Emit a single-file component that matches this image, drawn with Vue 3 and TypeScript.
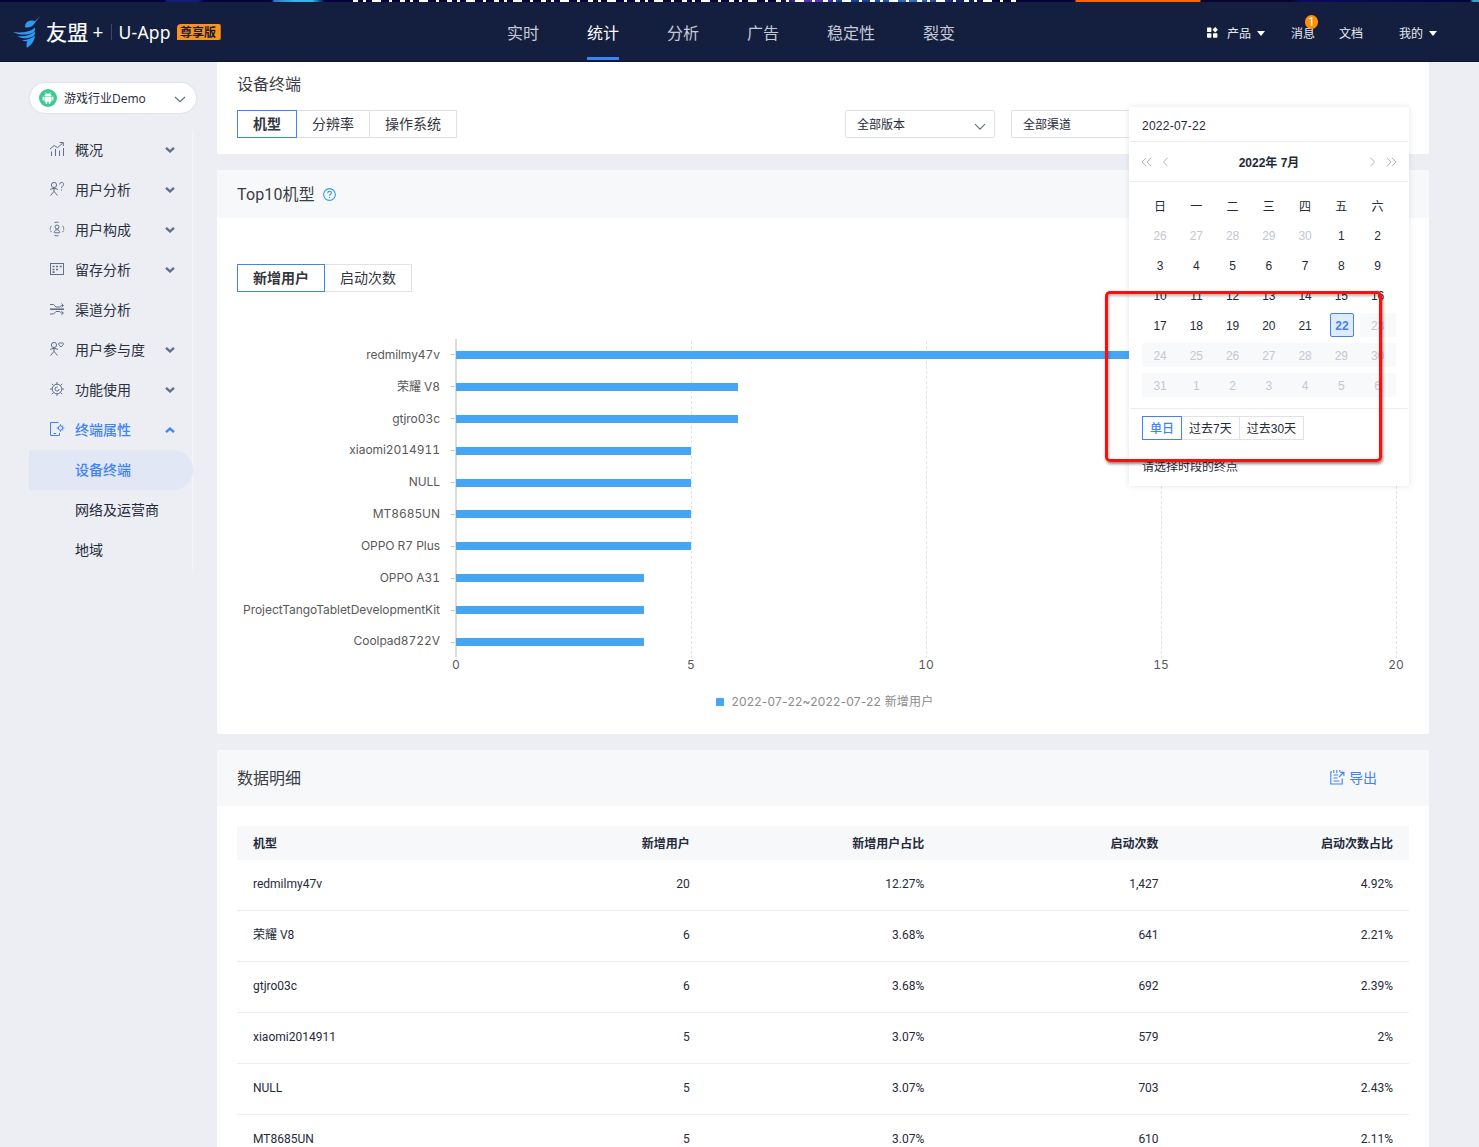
<script setup lang="ts">
interface MenuItem {
  label: string
  icon: string
  arrow: 'down' | 'up' | ''
}
interface Device {
  name: string
  users: number
  userShare: string
  launches: string
  launchShare: string
}
interface Day {
  n: number
  state: '' | 'muted' | 'selected' | 'off'
  edge: '' | 'first' | 'last'
}

const navItems: string[] = ['实时', '统计', '分析', '广告', '稳定性', '裂变']

const menu: MenuItem[] = [
  { label: '概况', icon: 'trend', arrow: 'down' },
  { label: '用户分析', icon: 'ask', arrow: 'down' },
  { label: '用户构成', icon: 'group', arrow: 'down' },
  { label: '留存分析', icon: 'grid', arrow: 'down' },
  { label: '渠道分析', icon: 'flow', arrow: '' },
  { label: '用户参与度', icon: 'heart', arrow: 'down' },
  { label: '功能使用', icon: 'gear', arrow: 'down' },
  { label: '终端属性', icon: 'device', arrow: 'up' },
]
const subMenu: string[] = ['设备终端', '网络及运营商', '地域']

const devices: Device[] = [
  { name: 'redmilmy47v', users: 20, userShare: '12.27%', launches: '1,427', launchShare: '4.92%' },
  { name: '荣耀 V8', users: 6, userShare: '3.68%', launches: '641', launchShare: '2.21%' },
  { name: 'gtjro03c', users: 6, userShare: '3.68%', launches: '692', launchShare: '2.39%' },
  { name: 'xiaomi2014911', users: 5, userShare: '3.07%', launches: '579', launchShare: '2%' },
  { name: 'NULL', users: 5, userShare: '3.07%', launches: '703', launchShare: '2.43%' },
  { name: 'MT8685UN', users: 5, userShare: '3.07%', launches: '610', launchShare: '2.11%' },
]
const bars: { name: string; value: number }[] = [
  ...devices.map((d) => ({ name: d.name, value: d.users })),
  { name: 'OPPO R7 Plus', value: 5 },
  { name: 'OPPO A31', value: 4 },
  { name: 'ProjectTangoTabletDevelopmentKit', value: 4 },
  { name: 'Coolpad8722V', value: 4 },
]
const axisMax = 20
const ticks: number[] = [0, 5, 10, 15, 20]

const weekdays: string[] = ['日', '一', '二', '三', '四', '五', '六']
// July 2022 starts on a Friday; the grid opens on June 26.
const days: Day[] = Array.from({ length: 42 }, (_, i): Day => {
  const n = i < 5 ? 26 + i : i < 36 ? i - 4 : i - 35
  const state = i < 5 ? 'muted' : i === 26 ? 'selected' : i > 26 ? 'off' : ''
  const edge = i === 27 ? 'first' : i % 7 === 0 ? 'first' : i % 7 === 6 ? 'last' : ''
  return { n, state, edge }
})
</script>

<template>
  <div class="page">
    <div class="banner"><span class="banner-art"></span></div>
    <header class="header">
      <div class="brand">
        <svg class="bird" width="28" height="32" viewBox="0 0 28 32">
          <path fill="#2d9bf3" d="M27 0 L22 5.2 C20 4 16 4.3 14 6 C12.3 7.6 12 9.5 12 11.2 C16 12 19.5 10.5 21.5 7.5 L22.8 5.8 Z" />
          <path fill="#2d9bf3" d="M0 16 C8 17 17 16.5 22 11.5 C22.5 14 21.5 15.8 20 16.7 C14 19.5 5 19 0 16 Z" />
          <path fill="#2d9bf3" d="M4.5 20 C11 20.8 18 19.5 22 15.5 C22.4 17.5 21.5 19.5 19.8 20.5 C15 23 8.5 23 4.5 20 Z" />
          <path fill="#2d9bf3" d="M9 24 C14 24.3 18.5 22.7 21.8 19.5 C22 24 18.5 29.5 13.8 31.8 C13.5 29 13.3 27 14.4 25.2 C12.5 25.5 10.5 25 9 24 Z" />
        </svg>
        <span class="brand-cn">友盟</span><span class="brand-plus">+</span>
        <i class="brand-line"></i>
        <span class="brand-app">U-App</span>
        <span class="brand-tag">尊享版</span>
      </div>
      <nav class="nav">
        <a v-for="(n, i) in navItems" :key="n" :class="{ active: i === 1 }">{{ n }}</a>
      </nav>
      <div class="tools">
        <svg class="apps" width="11" height="11" viewBox="0 0 11 11" fill="#fff">
          <rect x="0" y="0.5" width="4.4" height="4.4" rx=".6" /><path d="M8.2 0 L10.9 2.7 L8.2 5.4 L5.5 2.7 Z" />
          <rect x="0" y="6.3" width="4.4" height="4.4" rx=".6" /><rect x="6" y="6.3" width="4.4" height="4.4" rx=".6" />
        </svg>
        <span class="t-product">产品</span><i class="caret"></i>
        <span class="t-msg">消息<b class="badge">1</b></span>
        <span class="t-doc">文档</span>
        <span class="t-mine">我的</span><i class="caret"></i>
      </div>
    </header>

    <div class="body">
      <aside class="side">
        <div class="app-select">
          <svg width="18" height="18" viewBox="0 0 18 18">
            <circle cx="9" cy="9" r="9" fill="#3ecb93" />
            <g fill="#fff"><path d="M5.4 7 C5.6 5.4 7 4.4 9 4.4 C11 4.4 12.4 5.4 12.6 7 Z" />
              <rect x="5.4" y="7.5" width="7.2" height="5.2" rx=".6" /><rect x="3.6" y="7.5" width="1.3" height="4" rx=".6" /><rect x="13.1" y="7.5" width="1.3" height="4" rx=".6" />
              <rect x="6.7" y="12" width="1.5" height="3" rx=".6" /><rect x="9.8" y="12" width="1.5" height="3" rx=".6" /></g>
            <path d="M6.4 3 L7.3 4.8 M11.6 3 L10.7 4.8" stroke="#fff" stroke-width=".6" />
          </svg>
          <span>游戏行业Demo</span>
          <svg class="chev" width="12" height="7" viewBox="0 0 12 7"><path d="M1 1 L6 5.7 L11 1" fill="none" stroke="#5f7088" stroke-width="1.2" /></svg>
        </div>
        <ul class="menu">
          <li v-for="m in menu" :key="m.label" :class="{ open: m.arrow === 'up' }">
            <svg class="m-icon" width="16" height="16" viewBox="0 0 16 16" fill="none" stroke="currentColor" stroke-width="1">
              <template v-if="m.icon === 'trend'">
                <path d="M1 8 L5.2 4.6 L8.6 6.6 L13.8 2 M10.6 1.5 H14.3 V5" /><path d="M2.5 15 V10.5 M6.5 15 V8 M10.5 15 V9.5 M14.5 15 V7" />
              </template>
              <template v-else-if="m.icon === 'ask'">
                <circle cx="5" cy="4" r="2.6" /><path d="M5 6.6 V10.6 M1 8.5 C3 7.2 7 7.2 9 8.5 M5 10.4 L1.5 14.5 M5 10.4 L8.5 14.5" />
                <path d="M10.6 3.5 C10.6 .6 14.6 .8 14.6 3.3 C14.6 5 12.6 5 12.6 7 M12.6 8.4 V9.6" />
              </template>
              <template v-else-if="m.icon === 'group'">
                <circle cx="8" cy="6" r="2" /><path d="M5.2 12 C5.2 7.6 10.8 7.6 10.8 12 M6 11.8 H10" />
                <path d="M5.5 1.6 C7 1 9 1 10.5 1.6 M5.5 14.4 C7 15 9 15 10.5 14.4 M2.4 4.8 C.9 6.5 .9 9.5 2.4 11.2 M13.6 4.8 C15.1 6.5 15.1 9.5 13.6 11.2" stroke-dasharray="4 1" />
              </template>
              <template v-else-if="m.icon === 'grid'">
                <rect x="1.5" y="2.5" width="13" height="11" />
                <path d="M3.5 5.5 h2 M7 5.5 h2 M10.7 5.5 h2 M3.5 8.5 h2 M7 8.5 h2 M3.5 11.2 h2" stroke-width="1.7" />
              </template>
              <template v-else-if="m.icon === 'flow'">
                <path d="M1 3.5 H4.5 L7 6 H10.5 L12.5 4.5 H14.2 M12.4 2.6 L14.4 4.5 L12.4 6.4 M1 13 H4.5 L7 10.5 H10.5 L12.5 12 H14.2 M12.4 10.1 L14.4 12 L12.4 13.9" />
                <path d="M1 8.2 H15" stroke-width="1.6" />
              </template>
              <template v-else-if="m.icon === 'heart'">
                <circle cx="5" cy="4" r="2.6" /><path d="M5 6.6 V10.6 M1 8.5 C3 7.2 7 7.2 9 8.5 M5 10.4 L1.5 14.5 M5 10.4 L8.5 14.5" />
                <path d="M12 6 L9.8 3.6 C9 2 11 1 12 2.4 C13 1 15 2 14.3 3.6 Z" />
              </template>
              <template v-else-if="m.icon === 'gear'">
                <circle cx="8" cy="8" r="4.8" /><circle cx="8" cy="8" r="2" stroke-dasharray="9 3" />
                <path d="M8 3.2 V1 M8 15 V12.8 M3.2 8 H1 M15 8 H12.8 M4.6 4.6 L2.8 2.8 M11.4 4.6 L13.2 2.8 M4.6 11.4 L2.8 13.2 M11.4 11.4 L13.2 13.2" />
              </template>
              <template v-else>
                <path d="M9.5 1.5 H1.5 V14.5 H10.5 V12 M4.5 12.5 H7" /><circle cx="11.5" cy="7" r="2.2" />
                <path d="M11.5 3.2 V4.8 M11.5 9.2 V10.8 M7.6 7 H9.3 M13.7 7 H15.3 M14 4.5 L13 5.5 M14 9.5 L13 8.5" />
              </template>
            </svg>
            <span>{{ m.label }}</span>
            <svg v-if="m.arrow" class="m-arrow" :class="m.arrow" width="10" height="8" viewBox="0 0 10 8"><path d="M1 1.8 L5 5.4 L9 1.8" fill="none" stroke="currentColor" stroke-width="2.3" /></svg>
          </li>
        </ul>
        <ul class="sub">
          <li v-for="(s, i) in subMenu" :key="s" :class="{ current: i === 0 }">{{ s }}</li>
        </ul>
      </aside>

      <main class="main">
        <section class="card filter">
          <h2>设备终端</h2>
          <div class="filter-row">
            <div class="tabs"><span class="on">机型</span><span>分辨率</span><span>操作系统</span></div>
            <div class="select s1">全部版本<svg width="12" height="8" viewBox="0 0 12 8"><path d="M1 1.2 L6 6.2 L11 1.2" fill="none" stroke="#5f7088" stroke-width="1.2" /></svg></div>
            <div class="select s2">全部渠道</div>
          </div>
        </section>

        <section class="card top">
          <div class="head"><span class="latin">Top10机型</span>
            <svg width="13" height="13" viewBox="0 0 12 12" fill="none" stroke="#2d9bf3"><circle cx="6" cy="6" r="5.4" /><path d="M4.3 4.8 C4.3 2.6 7.7 2.6 7.7 4.6 C7.7 5.8 6 5.8 6 7.2 M6 8.2 V9.3" /></svg>
          </div>
          <div class="tabs"><span class="on">新增用户</span><span>启动次数</span></div>
          <div class="chart">
            <div class="plot">
              <div class="names"><span v-for="b in bars" :key="b.name">{{ b.name }}</span></div>
              <div class="marks"><i v-for="b in bars" :key="b.name"></i></div>
              <div class="area">
                <div v-for="b in bars" :key="b.name" class="row"><i :style="{ width: (b.value / axisMax) * 100 + '%' }"></i></div>
              </div>
            </div>
            <div class="ticks"><span v-for="t in ticks" :key="t">{{ t }}</span></div>
            <div class="legend"><i></i>2022-07-22~2022-07-22 新增用户</div>
          </div>
        </section>

        <section class="card detail">
          <div class="head"><span>数据明细</span>
            <a class="export">
              <svg width="15" height="15" viewBox="0 0 15 15" fill="none" stroke="#3f83f8" stroke-width="1.1"><path d="M2 1.8 H.8 V14 H12.2 V8.5 M3.8 0 V3 M6.8 0 V3 M9.8 0 V2 M3.5 5 H8 M3.5 8 H7.5 M3.5 11 H9.5 M9 7 L13.5 2.5 M10.3 2.4 H13.9 V6" /></svg>导出</a>
          </div>
          <div class="table">
            <div class="tr th"><span>机型</span><span>新增用户</span><span>新增用户占比</span><span>启动次数</span><span>启动次数占比</span></div>
            <div v-for="d in devices" :key="d.name" class="tr">
              <span>{{ d.name }}</span><span>{{ d.users }}</span><span>{{ d.userShare }}</span><span>{{ d.launches }}</span><span>{{ d.launchShare }}</span>
            </div>
          </div>
        </section>
      </main>
    </div>

    <div class="picker">
      <div class="p-input">2022-07-22</div>
      <div class="p-nav">
        <svg width="28" height="10" viewBox="0 0 28 10" fill="none" stroke="#a4a9b3" stroke-width=".9"><path d="M5 .8 L1 5 L5 9.2 M10 .8 L6 5 L10 9.2 M26.5 .8 L22.5 5 L26.5 9.2" /></svg>
        <b>2022年 7月</b>
        <svg width="28" height="10" viewBox="0 0 28 10" fill="none" stroke="#a4a9b3" stroke-width=".9"><path d="M1.5 .8 L5.5 5 L1.5 9.2 M18 .8 L22 5 L18 9.2 M23 .8 L27 5 L23 9.2" /></svg>
      </div>
      <div class="p-grid">
        <span v-for="w in weekdays" :key="w" class="wd">{{ w }}</span>
        <span v-for="(d, i) in days" :key="i" class="day" :class="[d.state, d.edge]"><em>{{ d.n }}</em></span>
      </div>
      <div class="p-foot">
        <div class="quick"><span class="on">单日</span><span>过去7天</span><span>过去30天</span></div>
        <p>请选择时段的终点</p>
      </div>
    </div>
    <div class="marker"></div>
  </div>
</template>

<style>
body { margin: 0; background: #eceef4; }
</style>

<style scoped>
* { box-sizing: border-box; }
.page { position: relative; width: 1479px; height: 1147px; overflow: hidden; background: #eceef4; font-family: Roboto, "Noto Sans CJK SC", sans-serif; font-size: 12px; color: #252a3a; }
ul { list-style: none; margin: 0; padding: 0; }
h2 { margin: 0; font-weight: 400; }
i, em { font-style: normal; }

.banner { height: 2px; padding-left: 353px; background: linear-gradient(90deg, #03023c 0 165px, #121d78 166px 198px, #03023c 205px 272px, #3273c7 274px, #38b4eb 295px 312px, #03023c 325px 780px, #5630b8 800px 820px, #153f9e 840px 870px, #3273c7 910px, #1c2a7a 950px, #03023c 1000px 1075px, #ff6500 1076px 1200px, #08042f 1201px 1290px, #0d0b5e 1300px, #03023c 1470px, #41a1bd 1473px); }
.banner-art { display: block; width: 667px; height: 2px; background: repeating-linear-gradient(90deg, #fff 0 5px, transparent 5px 10px, #fff 10px 13px, transparent 13px 19px, #fff 19px 28px, transparent 28px 36px, #fff 36px 39px, transparent 39px 47px); }
.header { height: 60px; display: flex; background: #141f3f; border-bottom: 1px solid #0b1634; color: #fff; }
.brand { width: 507px; padding-left: 14px; display: flex; align-items: center; height: 60px; }
.bird { flex: none; margin-top: -1px; margin-left: -1px; margin-right: 1px; }
.brand-cn { font: 400 21px/30px "Noto Sans CJK SC", sans-serif; margin-left: 4px; margin-top: -3px; letter-spacing: .3px; -webkit-text-stroke: .2px #fff; }
.brand-plus { font: 400 19px/30px "Noto Sans", sans-serif; margin-left: 4px; width: 11px; }
.brand-line { width: 1px; height: 16px; background: #3e4862; margin: 0 7px 0 7px; }
.brand-app { font: 400 17.5px/30px "Noto Sans", sans-serif; width: 52px; white-space: nowrap; margin-top: -1px; letter-spacing: .2px; }
.brand-tag { width: 44px; height: 16px; margin-left: 6px; background: #f7931e; border-radius: 4px 2px 2px 0; border-right: 1px solid #d96a10; color: #1b1d33; font: 700 12px/15px "Noto Sans CJK SC", sans-serif; text-align: center; }
.nav { display: flex; gap: 48px; height: 60px; }
.nav a { font-size: 16px; line-height: 64px; height: 58px; color: #c5cad6; }
.nav a.active { color: #fff; border-bottom: 3px solid #3f83f8; }
.tools { margin-left: auto; display: flex; align-items: center; height: 61px; padding-right: 42px; color: #e9ebf1; line-height: 20px; }
.tools > span { padding-top: 2px; }
.t-product { margin-left: 9px; }
.caret { border: 4px solid transparent; border-top: 5px solid #fff; border-bottom: 0; margin-left: 6px; margin-top: 1px; }
.t-msg { position: relative; margin-left: 26px; }
.badge { position: absolute; left: 14px; top: -7px; width: 13px; height: 14px; border-radius: 7px; background: #fb9206; color: #fff; font: 400 12px/14px Roboto, sans-serif; text-align: center; }
.t-doc { margin-left: 24px; }
.t-mine { margin-left: 36px; }

.body { display: flex; }
.side { width: 217px; flex: none; padding: 21px 0 0 29px; }
.app-select { width: 166px; height: 30px; border-radius: 15px; background: #fff; box-shadow: 0 0 2px rgba(60, 80, 120, .18); display: flex; align-items: center; padding: 0 10px 0 9px; margin-left: 1px; }
.app-select span { margin-left: 7px; white-space: nowrap; line-height: 30px; padding-top: 2px; font-family: "Open Sans", "Noto Sans CJK SC", sans-serif; }
.app-select .chev { margin-left: auto; margin-top: 2px; }
.menu { width: 164px; margin-top: 17px; border-right: 1px solid #f2f4f8; }
.menu li { height: 40px; display: flex; align-items: center; padding-left: 20px; font-size: 14px; line-height: 40px; color: #2b3040; }
.m-icon { color: #5f7088; margin-right: 10px; margin-top: -2px; flex: none; }
.m-arrow { margin-left: auto; margin-right: 17px; color: #5f7088; }
.m-arrow.up { transform: rotate(180deg); }
.menu li.open, .menu li.open svg { color: #3f83f8; }
.menu li.open { font-weight: 500; }
.sub { width: 164px; border-right: 1px solid #f2f4f8; }
.sub li { height: 40px; line-height: 40px; padding-left: 46px; font-size: 14px; margin-right: -1px; }
.sub .current { background: #e1e7f5; color: #3f83f8; font-weight: 500; border-radius: 0 20px 20px 0; }

.main { width: 1212px; flex: none; }
.card { background: #fff; border-radius: 2px; }
.filter { height: 92px; padding: 11px 20px 0; margin-bottom: 16px; }
.filter h2 { font-size: 16px; line-height: 24px; height: 37px; color: #3a3d45; }
.filter-row { display: flex; }
.tabs { display: flex; height: 28px; font-size: 14px; line-height: 26px; color: #33363e; }
.tabs span { height: 28px; padding: 0 15px; border: 1px solid #dfe2e9; border-left: 0; }
.tabs .on { border: 1px solid #3f83f8; font-weight: 700; }
.select { width: 150px; height: 28px; border: 1px solid #dfe2e9; border-radius: 2px; line-height: 26px; padding: 2px 8px 0 11px; display: flex; align-items: center; justify-content: space-between; }
.select svg { margin-top: 3px; }
.s1 { margin-left: 388px; }
.s2 { margin-left: 16px; }
.head { background: #f7f8fa; padding: 0 20px; display: flex; align-items: center; font-size: 16px; color: #3a3d45; }
.top { height: 564px; margin-bottom: 16px; }
.top .head { height: 48px; line-height: 48px; }
.latin { letter-spacing: .15px; padding-top: 2px; }
.top .head svg { margin-left: 8px; }
.top > .tabs { margin: 46px 0 0 20px; }
.chart { margin-top: 47px; padding-left: 20px; color: #595959; font-family: Inter, "Noto Sans CJK SC", sans-serif; font-variant-numeric: tabular-nums; }
.plot { display: flex; height: 319px; }
.names { width: 203px; height: 318.4px; margin-top: .4px; display: flex; flex-direction: column; text-align: right; white-space: nowrap; letter-spacing: -.05px; }
.names span { flex: 1; display: flex; align-items: center; justify-content: flex-end; line-height: 16px; padding-bottom: 1px; }
.marks { width: 15px; display: flex; flex-direction: column; align-items: flex-end; }
.marks i { flex: 1; width: 4px; background: linear-gradient(#ccc, #ccc) center / 4px 1px no-repeat; }
.area { width: 942px; border-left: 2px solid #dcdcdc; display: flex; flex-direction: column; background: repeating-linear-gradient(180deg, #fff 0 2px, transparent 2px 5px), linear-gradient(90deg, transparent 233.5px, #e3e3e3 233.5px 234.5px, transparent 234.5px 468.5px, #e3e3e3 468.5px 469.5px, transparent 469.5px 703.5px, #e3e3e3 703.5px 704.5px, transparent 704.5px 938.5px, #e3e3e3 938.5px 939.5px, transparent 939.5px); }
.row { flex: 1; display: flex; align-items: center; margin-left: -1px; width: 940px; }
.row i { height: 8px; background: #47a5f5; }
.ticks { display: flex; justify-content: space-between; margin-left: 204px; width: 970px; line-height: 14px; }
.ticks span { width: 30px; text-align: center; }
.legend { display: flex; align-items: center; justify-content: center; width: 1175px; margin-top: 21px; line-height: 18px; color: #8c8c8c; font-variant-numeric: normal; letter-spacing: .2px; }
.legend i { width: 8px; height: 8px; background: #47a5f5; margin-right: 8px; }
.detail { height: 460px; }
.detail .head { height: 56px; padding-bottom: 2px; }
.export { margin-left: auto; margin-right: 32px; color: #3f83f8; font-size: 14px; display: flex; align-items: center; gap: 4px; }
.table { margin: 20px 20px 0; }
.tr { display: flex; height: 51px; line-height: 48px; border-bottom: 1px solid #eceef1; }
.tr span { width: 234.5px; text-align: right; padding-right: 16px; }
.tr span:first-child { width: 234px; padding-left: 16px; text-align: left; }
.tr span:nth-child(2) { width: 235px; }
.th { height: 34px; line-height: 37px; background: #f7f8fa; border: 0; font-weight: 700; }

.picker { position: absolute; left: 1129px; top: 107px; width: 280px; height: 379px; background: #fff; box-shadow: 0 0 6px rgba(60, 70, 130, .14); font-family: "Liberation Sans", "Noto Sans CJK SC", sans-serif; }
.p-input { height: 35px; margin: 0 1px; padding-left: 12px; line-height: 39px; border-bottom: 1px solid #eceef1; font-size: 12px; letter-spacing: .25px; }
.p-nav { height: 40px; margin: 0 1px; padding: 0 11px; display: flex; align-items: center; justify-content: space-between; border-bottom: 1px solid #eceef1; }
.p-nav b { font-weight: 700; }
.p-grid { display: grid; grid-template-columns: repeat(7, 36.25px); grid-auto-rows: 30px; padding: 8px 13px 0; }
.wd { text-align: center; padding: 5px 0 0; line-height: 24px; }
.day { padding: 3px 0; text-align: center; }
.day em { display: block; height: 24px; line-height: 26px; }
.day.muted { color: #c4c8d0; }
.day.off { color: #c4c8d0; }
.day.off em { background: #f8f9fb; }
.day.off.first em { border-radius: 3px 0 0 3px; }
.day.off.last em { border-radius: 0 3px 3px 0; }
.day.selected em { width: 24px; margin: 0 0 0 6.75px; border: 1px solid #3f83f8; border-radius: 2px; background: #deebfd; color: #3f83f8; font-weight: 700; line-height: 24px; }
.p-foot { margin: 8px 1px 0; border-top: 1px solid #eceef1; padding: 7px 12px 0; }
.quick { display: flex; line-height: 25px; }
.quick span { height: 24px; padding: 0 7px; border: 1px solid #dfe2e9; border-left: 0; white-space: nowrap; }
.quick .on { border: 1px solid #3f83f8; color: #3f83f8; font-weight: 500; }
.p-foot p { margin: 17px 0 0; line-height: 20px; }
.marker { position: absolute; left: 1105px; top: 291px; width: 277px; height: 171px; border: 3px solid #fb0f0c; border-radius: 5px; box-shadow: 1px 2px 3px rgba(60, 0, 0, .5), inset 1px 2px 3px rgba(60, 0, 0, .3); }
</style>
